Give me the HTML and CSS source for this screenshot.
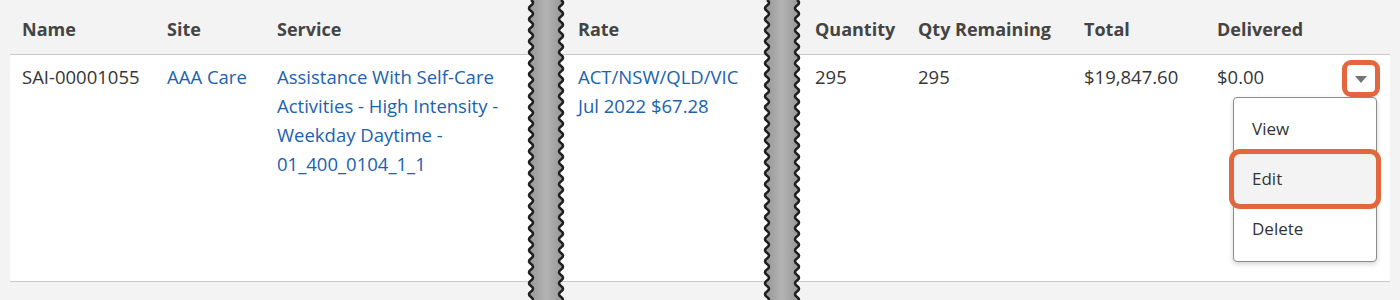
FILE: index.html
```html
<!DOCTYPE html>
<html>
<head>
<meta charset="utf-8">
<link rel="stylesheet" href="styles.css">
</head>
<body>
<svg class="defs" width="0" height="0" aria-hidden="true">
  <defs>
    <linearGradient id="brkfill" x1="0" y1="0" x2="1" y2="0">
      <stop offset="0" stop-color="#979797"/>
      <stop offset="0.5" stop-color="#b3b3b3"/>
      <stop offset="1" stop-color="#979797"/>
    </linearGradient>
    <symbol id="brk" viewBox="0 0 38 308">
      <path fill="url(#brkfill)" d="M4,0 q4,2.75 0,5.5 q-4,2.75 0,5.5 q4,2.75 0,5.5 q-4,2.75 0,5.5 q4,2.75 0,5.5 q-4,2.75 0,5.5 q4,2.75 0,5.5 q-4,2.75 0,5.5 q4,2.75 0,5.5 q-4,2.75 0,5.5 q4,2.75 0,5.5 q-4,2.75 0,5.5 q4,2.75 0,5.5 q-4,2.75 0,5.5 q4,2.75 0,5.5 q-4,2.75 0,5.5 q4,2.75 0,5.5 q-4,2.75 0,5.5 q4,2.75 0,5.5 q-4,2.75 0,5.5 q4,2.75 0,5.5 q-4,2.75 0,5.5 q4,2.75 0,5.5 q-4,2.75 0,5.5 q4,2.75 0,5.5 q-4,2.75 0,5.5 q4,2.75 0,5.5 q-4,2.75 0,5.5 q4,2.75 0,5.5 q-4,2.75 0,5.5 q4,2.75 0,5.5 q-4,2.75 0,5.5 q4,2.75 0,5.5 q-4,2.75 0,5.5 q4,2.75 0,5.5 q-4,2.75 0,5.5 q4,2.75 0,5.5 q-4,2.75 0,5.5 q4,2.75 0,5.5 q-4,2.75 0,5.5 q4,2.75 0,5.5 q-4,2.75 0,5.5 q4,2.75 0,5.5 q-4,2.75 0,5.5 q4,2.75 0,5.5 q-4,2.75 0,5.5 q4,2.75 0,5.5 q-4,2.75 0,5.5 q4,2.75 0,5.5 q-4,2.75 0,5.5 q4,2.75 0,5.5 q-4,2.75 0,5.5 q4,2.75 0,5.5 q-4,2.75 0,5.5 q4,2.75 0,5.5 q-4,2.75 0,5.5 L34,308 q-4,-2.75 0,-5.5 q4,-2.75 0,-5.5 q-4,-2.75 0,-5.5 q4,-2.75 0,-5.5 q-4,-2.75 0,-5.5 q4,-2.75 0,-5.5 q-4,-2.75 0,-5.5 q4,-2.75 0,-5.5 q-4,-2.75 0,-5.5 q4,-2.75 0,-5.5 q-4,-2.75 0,-5.5 q4,-2.75 0,-5.5 q-4,-2.75 0,-5.5 q4,-2.75 0,-5.5 q-4,-2.75 0,-5.5 q4,-2.75 0,-5.5 q-4,-2.75 0,-5.5 q4,-2.75 0,-5.5 q-4,-2.75 0,-5.5 q4,-2.75 0,-5.5 q-4,-2.75 0,-5.5 q4,-2.75 0,-5.5 q-4,-2.75 0,-5.5 q4,-2.75 0,-5.5 q-4,-2.75 0,-5.5 q4,-2.75 0,-5.5 q-4,-2.75 0,-5.5 q4,-2.75 0,-5.5 q-4,-2.75 0,-5.5 q4,-2.75 0,-5.5 q-4,-2.75 0,-5.5 q4,-2.75 0,-5.5 q-4,-2.75 0,-5.5 q4,-2.75 0,-5.5 q-4,-2.75 0,-5.5 q4,-2.75 0,-5.5 q-4,-2.75 0,-5.5 q4,-2.75 0,-5.5 q-4,-2.75 0,-5.5 q4,-2.75 0,-5.5 q-4,-2.75 0,-5.5 q4,-2.75 0,-5.5 q-4,-2.75 0,-5.5 q4,-2.75 0,-5.5 q-4,-2.75 0,-5.5 q4,-2.75 0,-5.5 q-4,-2.75 0,-5.5 q4,-2.75 0,-5.5 q-4,-2.75 0,-5.5 q4,-2.75 0,-5.5 q-4,-2.75 0,-5.5 q4,-2.75 0,-5.5 q-4,-2.75 0,-5.5 q4,-2.75 0,-5.5 q-4,-2.75 0,-5.5 q4,-2.75 0,-5.5 Z"/>
      <path id="wl" fill="none" stroke="#1f1f1f" stroke-width="2.6" d="M4,0 q4,2.75 0,5.5 q-4,2.75 0,5.5 q4,2.75 0,5.5 q-4,2.75 0,5.5 q4,2.75 0,5.5 q-4,2.75 0,5.5 q4,2.75 0,5.5 q-4,2.75 0,5.5 q4,2.75 0,5.5 q-4,2.75 0,5.5 q4,2.75 0,5.5 q-4,2.75 0,5.5 q4,2.75 0,5.5 q-4,2.75 0,5.5 q4,2.75 0,5.5 q-4,2.75 0,5.5 q4,2.75 0,5.5 q-4,2.75 0,5.5 q4,2.75 0,5.5 q-4,2.75 0,5.5 q4,2.75 0,5.5 q-4,2.75 0,5.5 q4,2.75 0,5.5 q-4,2.75 0,5.5 q4,2.75 0,5.5 q-4,2.75 0,5.5 q4,2.75 0,5.5 q-4,2.75 0,5.5 q4,2.75 0,5.5 q-4,2.75 0,5.5 q4,2.75 0,5.5 q-4,2.75 0,5.5 q4,2.75 0,5.5 q-4,2.75 0,5.5 q4,2.75 0,5.5 q-4,2.75 0,5.5 q4,2.75 0,5.5 q-4,2.75 0,5.5 q4,2.75 0,5.5 q-4,2.75 0,5.5 q4,2.75 0,5.5 q-4,2.75 0,5.5 q4,2.75 0,5.5 q-4,2.75 0,5.5 q4,2.75 0,5.5 q-4,2.75 0,5.5 q4,2.75 0,5.5 q-4,2.75 0,5.5 q4,2.75 0,5.5 q-4,2.75 0,5.5 q4,2.75 0,5.5 q-4,2.75 0,5.5 q4,2.75 0,5.5 q-4,2.75 0,5.5 q4,2.75 0,5.5 q-4,2.75 0,5.5"/>
      <use href="#wl" x="30" y="0"/>
    </symbol>
  </defs>
</svg>

<div class="page">
  <div class="seg seg1">
    <div class="hdr">
      <div class="cell name">Name</div>
      <div class="cell">Site</div>
      <div class="cell">Service</div>
    </div>
    <div class="row">
      <div class="cell name">SAI-00001055</div>
      <div class="cell"><a class="lnk">AAA Care</a></div>
      <div class="cell service"><a class="lnk">Assistance With Self-Care Activities - High Intensity - Weekday Daytime - 01_400_0104_1_1</a></div>
    </div>
  </div>

  <div class="brk"><svg class="brk-svg" viewBox="0 0 38 308"><use href="#brk"/></svg></div>

  <div class="seg seg2">
    <div class="hdr">
      <div class="cell rate">Rate</div>
    </div>
    <div class="row">
      <div class="cell rate"><a class="lnk">ACT/NSW/QLD/VIC Jul 2022 $67.28</a></div>
    </div>
  </div>

  <div class="brk"><svg class="brk-svg" viewBox="0 0 38 308"><use href="#brk"/></svg></div>

  <div class="seg seg3">
    <div class="hdr">
      <div class="cell qty">Quantity</div>
      <div class="cell">Qty Remaining</div>
      <div class="cell">Total</div>
      <div class="cell">Delivered</div>
    </div>
    <div class="row">
      <div class="cell qty">295</div>
      <div class="cell">295</div>
      <div class="cell">$19,847.60</div>
      <div class="cell">$0.00</div>
    </div>
  </div>

  <div class="menu-btn"><span class="tri"></span></div>
  <div class="menu">
    <div class="item">View</div>
    <div class="item active">Edit</div>
    <div class="item">Delete</div>
  </div>
</div>
</body>
</html>
```

FILE: styles.css
```css
html, body {
  margin: 0;
  padding: 0;
  background: #f3f3f3;
}

body {
  font-family: "Open Sans", "Noto Sans", sans-serif;
  font-size: 18px;
  color: #363636;
}

.defs {
  position: absolute;
  width: 0;
  height: 0;
  overflow: hidden;
}

.page {
  position: relative;
  display: flex;
  padding: 0 10px;
  height: 300px;
  overflow: hidden;
}

.seg {
  display: flex;
  flex-direction: column;
  flex: none;
}

.seg1 { width: 517px; }
.seg2 { width: 198px; }
.seg3 { width: 589px; }

.hdr, .row {
  display: grid;
  border-bottom: 1px solid #c9c9c9;
}

.hdr {
  height: 54px;
  font-weight: 700;
  color: #444;
  line-height: 29px;
}

.hdr .cell {
  padding-top: 15px;
}

.row {
  height: 226px;
  background: #fff;
  font-size: 18.5px;
  line-height: 29px;
}

.row .cell {
  padding-top: 7px;
}

.seg1 .hdr, .seg1 .row { grid-template-columns: 157px 110px 1fr; }
.seg2 .hdr, .seg2 .row { grid-template-columns: 1fr; }
.seg3 .hdr, .seg3 .row { grid-template-columns: 117px 166px 133px 1fr; }

.cell.name { padding-left: 12px; }
.cell.service { padding-right: 10px; }
.cell.rate { padding-left: 13px; padding-right: 12px; }
.cell.qty { padding-left: 14px; }

.lnk {
  color: #1b62b0;
  text-decoration: none;
}

.brk {
  width: 38px;
  flex: none;
  height: 300px;
  background: linear-gradient(to bottom,
    #f3f3f3 0 54px,
    #c9c9c9 54px 55px,
    #ffffff 55px 281px,
    #c9c9c9 281px 282px,
    #f3f3f3 282px);
}

.brk-svg {
  display: block;
  width: 38px;
  height: 308px;
}

.menu-btn {
  position: absolute;
  left: 1342px;
  top: 60px;
  width: 28px;
  height: 27px;
  border: 5px solid #e4663f;
  border-radius: 9px;
  background: #fff;
  display: flex;
  align-items: center;
  justify-content: center;
}

.tri {
  display: block;
  width: 0;
  height: 0;
  border-left: 6px solid transparent;
  border-right: 6px solid transparent;
  border-top: 7px solid #757575;
  margin-top: 2px;
}

.menu {
  position: absolute;
  left: 1233px;
  top: 97px;
  width: 142px;
  padding: 6px 0 7px;
  background: #fff;
  border: 1px solid #8c8c8c;
  border-radius: 4px;
  box-shadow: 0 2px 5px rgba(0, 0, 0, 0.18);
  font-size: 17px;
}

.item {
  height: 50px;
  line-height: 50px;
  padding-left: 18px;
  color: #333;
}

.item.active {
  background: #f3f3f3;
  border-radius: 6px;
  box-shadow: 0 0 0 5px #e4663f;
  position: relative;
}
```
